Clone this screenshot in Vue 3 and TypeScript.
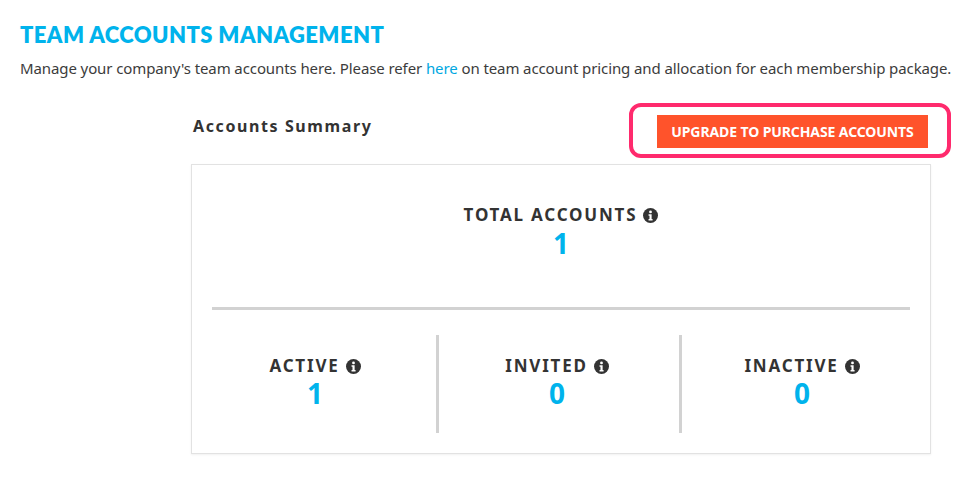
<script setup lang="ts">
interface Stat {
  label: string
  value: number
}

const stats: Stat[] = [
  { label: 'ACTIVE', value: 1 },
  { label: 'INVITED', value: 0 },
  { label: 'INACTIVE', value: 0 },
]
</script>

<template>
  <div class="page">
    <h1 class="title">TEAM ACCOUNTS MANAGEMENT</h1>
    <p class="intro">
      Manage your company's team accounts here. Please refer <a href="#">here</a> on team account pricing and allocation for each membership package.
    </p>

    <section class="summary">
      <div class="summary-head">
        <h2 class="summary-title">Accounts Summary</h2>
        <div class="upgrade-wrap">
          <button class="upgrade-btn">UPGRADE TO PURCHASE ACCOUNTS</button>
          <span class="highlight"></span>
        </div>
      </div>

      <div class="card">
        <div class="total">
          <div class="label">
            TOTAL ACCOUNTS
            <svg class="info" viewBox="0 0 16 16">
              <circle cx="8" cy="8" r="8" fill="#333" />
              <circle cx="8" cy="4.2" r="1.5" fill="#fff" />
              <path d="M5.9 6.7h3.3v5h1v1.5H5.9v-1.5h1v-3.5h-1z" fill="#fff" />
            </svg>
          </div>
          <div class="value">1</div>
        </div>
        <div class="stats">
          <div v-for="s in stats" :key="s.label" class="stat">
            <div class="label">
              {{ s.label }}
              <svg class="info" viewBox="0 0 16 16">
                <circle cx="8" cy="8" r="8" fill="#333" />
                <circle cx="8" cy="4.2" r="1.5" fill="#fff" />
                <path d="M5.9 6.7h3.3v5h1v1.5H5.9v-1.5h1v-3.5h-1z" fill="#fff" />
              </svg>
            </div>
            <div class="value">{{ s.value }}</div>
          </div>
        </div>
      </div>
    </section>
  </div>
</template>

<style>
body {
  background: #fff;
}
</style>

<style scoped>
.page {
  width: 978px;
  height: 478px;
  box-sizing: border-box;
  padding: 22px 0 0 20px;
  overflow: hidden;
  font-family: "Noto Sans", "Open Sans", sans-serif;
  color: #333;
}

.title {
  margin: 0;
  font-family: Lato, "Noto Sans", sans-serif;
  font-size: 22px;
  line-height: 26px;
  font-weight: 800;
  letter-spacing: 0.42px;
  color: #00b3ec;
}

.intro {
  margin: 8px 0 0;
  font-size: 15px;
  line-height: 24px;
  letter-spacing: -0.1px;
  white-space: nowrap;
  color: #3c3c3c;
}

.intro a {
  color: #00a7e1;
  text-decoration: none;
}

.summary {
  width: 740px;
  margin: 23px 0 0 171px;
}

.summary-head {
  display: flex;
  justify-content: space-between;
  align-items: flex-start;
  height: 61px;
}

.summary-title {
  margin: 12px 0 0 2px;
  font-size: 16px;
  line-height: 22px;
  font-weight: 700;
  letter-spacing: 1.6px;
}

.upgrade-wrap {
  position: relative;
  margin: 12px 3px 0 0;
}

.upgrade-btn {
  display: block;
  width: 271px;
  height: 33px;
  padding: 0;
  border: 0;
  background: #ff532b;
  color: #fff;
  font-family: "Noto Sans", sans-serif;
  font-size: 14px;
  font-weight: 700;
  letter-spacing: -0.1px;
}

.highlight {
  position: absolute;
  top: -12px;
  left: -28px;
  width: 322px;
  height: 55px;
  box-sizing: border-box;
  border: 4px solid #ff2a6d;
  border-radius: 12px;
}

.card {
  height: 290px;
  box-sizing: border-box;
  border: 1px solid #e2e2e2;
  box-shadow: 0 1px 2px rgba(0, 0, 0, 0.06);
  padding: 0 20px;
}

.total {
  height: 145px;
  box-sizing: border-box;
  padding-top: 39px;
  border-bottom: 3px solid #d2d2d2;
  text-align: center;
}

.stats {
  display: grid;
  grid-template-columns: 227px 243px 1fr;
  margin-top: 25px;
  height: 98px;
}

.stat {
  padding-top: 20px;
  text-align: center;
  border-right: 3px solid #d2d2d2;
}

.stat:nth-child(1) {
  padding-right: 18px;
}

.stat:nth-child(2) {
  padding-right: 4px;
}

.stat:last-child {
  padding-left: 12px;
  border-right: 0;
}

.label {
  display: flex;
  justify-content: center;
  align-items: center;
  gap: 6px;
  font-size: 17px;
  line-height: 22px;
  font-weight: 700;
  letter-spacing: 1.8px;
  color: #333;
}

.info {
  width: 15px;
  height: 15px;
}

.value {
  font-size: 28px;
  line-height: 34px;
  margin-top: -1px;
  font-weight: 700;
  color: #00b3ec;
}

.total .value {
  margin-top: 0;
}
</style>
